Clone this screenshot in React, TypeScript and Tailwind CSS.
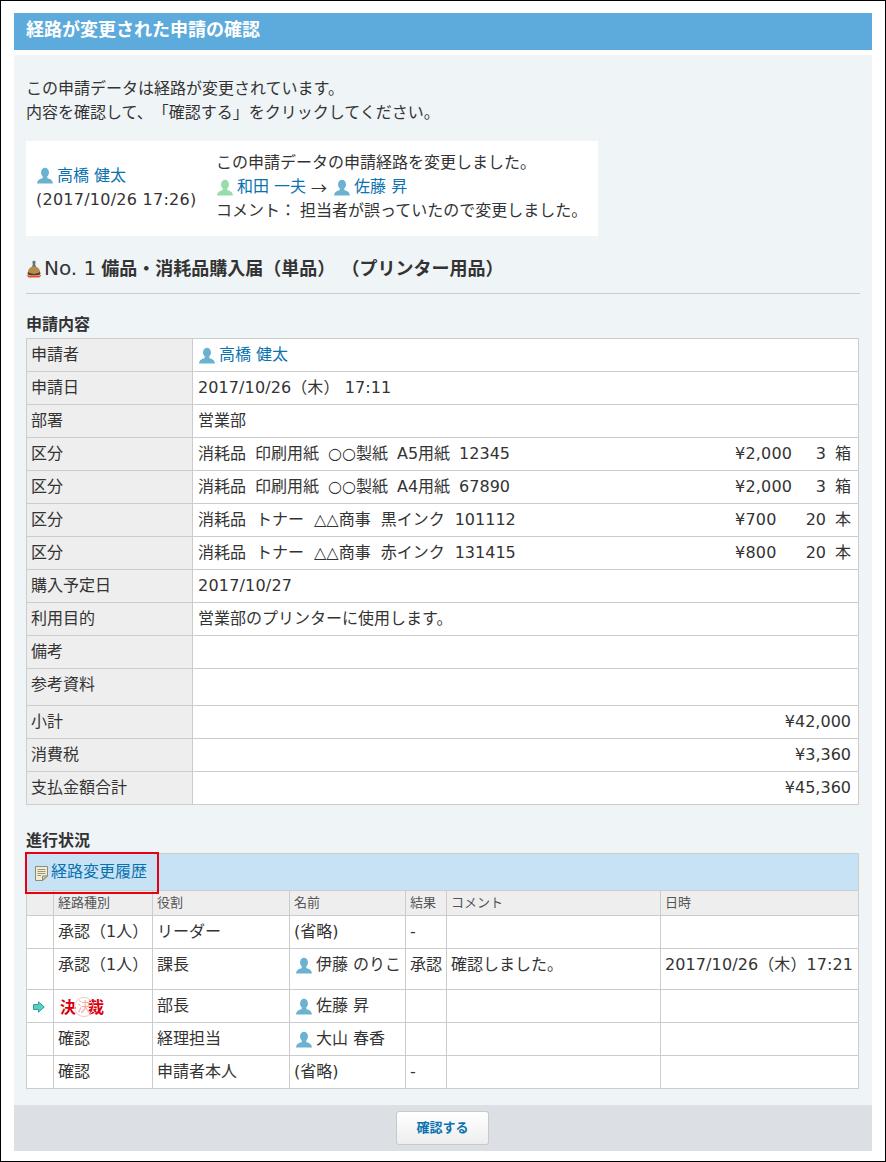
import React from "react";

const F = "font-['DejaVu_Sans','Noto_Sans_CJK_JP',sans-serif] [text-spacing-trim:space-all]";

function Person({ green = false, className = "" }: { green?: boolean; className?: string }) {
  const c = green ? "#97dcaa" : "#6bb2d0";
  return (
    <svg width="16" height="17" viewBox="0 0 16 17" className={"inline-block shrink-0 " + className}>
      <ellipse cx="8" cy="5.6" rx="4" ry="4.8" fill={c} />
      <path d="M5.9 9.5 L10.1 9.5 L10.5 11.2 C13 12 15.5 12.6 16 16.5 L0 16.5 C0.5 12.6 3 12 5.5 11.2 Z" fill={c} />
    </svg>
  );
}

function U({ name, green }: { name: string; green?: boolean }) {
  return (
    <span className="inline-flex items-center">
      <Person green={green} className="ml-[1px] mr-[4px]" />
      <span className="text-[#0b72b0]">{name}</span>
    </span>
  );
}

function P({ name }: { name: string }) {
  return (
    <span className="inline-flex items-center pl-[1px]">
      <Person className="ml-[1px] mr-[4px]" />
      <span>{name}</span>
    </span>
  );
}

function Stamp() {
  return (
    <svg width="16" height="18" viewBox="0 0 16 18" className="shrink-0">
      <path d="M6.4 2 C6.4 0.4 9.6 0.4 9.6 2 L9.2 4.5 L10.2 7 H5.8 L6.8 4.5 Z" fill="#66727c" />
      <path d="M2 12 C2 8.5 5 6.5 8 6.5 C11 6.5 14 8.5 14 12 C14 13.5 2 13.5 2 12 Z" fill="#b98a4e" />
      <path d="M2 11.5 C3 14 13 14 14 11.5 L14.5 14 C13 16 3 16 1.5 14 Z" fill="#5e3b1a" />
      <path d="M0.5 15 C3 16 13 16 15.5 15 L13.5 17.5 H2.5 Z" fill="#e2512a" />
    </svg>
  );
}

function Doc() {
  return (
    <svg width="13" height="15" viewBox="0 0 13 15" className="shrink-0 mt-[3px]">
      <path d="M0.5 0.5 H12.5 V10 L7.5 14.5 H0.5 Z" fill="#f1ecd2" stroke="#8d8a78" />
      <path d="M7.5 14.5 V10 H12.5 Z" fill="#cfc9a6" stroke="#8d8a78" />
      <path d="M2.5 3.5 H10.5 M2.5 5.5 H10.5 M2.5 7.5 H10.5 M2.5 9.5 H6" stroke="#9a9684" />
    </svg>
  );
}

function NextArrow() {
  return (
    <svg width="12" height="12" viewBox="0 0 12 12" className="block">
      <path d="M0.5 3.5 H5.5 V0.8 L11.3 6 L5.5 11.2 V8.5 H0.5 Z" fill="#55d2c6" stroke="#3d9a92" />
    </svg>
  );
}

const th = "border border-[#ccc] bg-[#eee] align-top font-normal text-left pl-[4px] pr-[5px] pt-[5px] text-[16px] leading-[22px]";
const td = "border border-[#ccc] bg-white align-top px-[5px] pt-[5px] text-[16px] leading-[22px]";

function Row({ label, h = "h-[33px]", children }: { label: string; h?: string; children?: React.ReactNode }) {
  return (
    <tr className={h}>
      <th className={th}>{label}</th>
      <td className={td}>{children}</td>
    </tr>
  );
}

function Item({ parts, price, qty, unit, gap = "gap-[9px]" }: { parts: string[]; price: string; qty: string; unit: string; gap?: string }) {
  return (
    <div className="flex pr-[2px] whitespace-nowrap">
      <div className={"flex-1 flex " + gap}>
        {parts.map((p, i) => (
          <span key={i}>{p}</span>
        ))}
      </div>
      <span className="w-[56px] text-left tracking-[0.2px]">{price}</span>
      <span className="w-[35px] text-right">{qty}</span>
      <span className="w-[25px] text-right">{unit}</span>
    </div>
  );
}

const pth = "border border-[#ccc] bg-[#eee] align-top font-normal text-left px-[4px] pt-[3px] text-[13px] leading-[18px] text-[#555]";
const ptd = "border border-[#ccc] bg-white align-top px-[4px] pt-[5px] text-[16px] leading-[22px] whitespace-nowrap";

function PRow({ h = "h-[33px]", cells, mark }: { h?: string; cells: React.ReactNode[]; mark?: boolean }) {
  return (
    <tr className={h}>
      <td className={ptd + " !px-[6px] !pt-[11px]"}>{mark ? <NextArrow /> : null}</td>
      {cells.map((c, i) => (
        <td key={i} className={ptd}>{c}</td>
      ))}
    </tr>
  );
}

export default function App() {
  return (
    <div className={F + " w-[886px] h-[1162px] border border-black bg-white text-[#333] overflow-hidden pt-[12px] px-[13px]"}>
      <div className="h-[37px] bg-[#5dabdc] text-white font-bold text-[18px] leading-[34px] px-[12px]">
        経路が変更された申請の確認
      </div>
      <div className="mt-[5px] h-[1050px] bg-[#eff4f7] px-[12px] pt-[22px]">
        <p className="text-[16px] leading-[24px]">この申請データは経路が変更されています。<br />内容を確認して、「確認する」をクリックしてください。</p>
        <div className="mt-[16px] w-[572px] h-[95px] bg-white flex text-[16px] leading-[24px] pl-[10px] pt-[10px] whitespace-nowrap">
          <div className="w-[180px] pt-[12px]">
            <div className="flex h-[25px] items-center"><U name="高橋 健太" /></div>
            <div className="tracking-[0.25px]">(2017/10/26 17:26)</div>
          </div>
          <div>
            <div>この申請データの申請経路を変更しました。</div>
            <div className="flex h-[24px] items-center"><U name="和田 一夫" green /><span className="ml-[5px] mr-[6px] font-['Noto_Sans_CJK_JP',sans-serif]">→</span><U name="佐藤 昇" /></div>
            <div>コメント：<span className="ml-[4px]">担当者が誤っていたので変更しました。</span></div>
          </div>
        </div>
        <div className="mt-[19px] flex items-center h-[27px] text-[20px] leading-[27px]">
          <Stamp />
          <span className="ml-[2px]">No. 1</span>
          <span className="ml-[5px] font-bold text-[18px] whitespace-pre">備品・消耗品購入届（単品） （プリンター用品）</span>
        </div>
        <div className="mt-[11px] border-t border-[#ccc]" />
        <div className="mt-[21px] font-bold text-[16px] leading-[20px] h-[23px]">申請内容</div>
        <table className="w-[833px] border-collapse table-fixed">
          <colgroup>
            <col className="w-[166px]" />
            <col />
          </colgroup>
          <tbody>
            <Row label="申請者"><U name="高橋 健太" /></Row>
            <Row label="申請日"><span className="tracking-[0.1px]">2017/10/26（木） 17:11</span></Row>
            <Row label="部署">営業部</Row>
            <Row label="区分"><Item parts={["消耗品", "印刷用紙", "○○製紙", "A5用紙", "12345"]} price="¥2,000" qty="3" unit="箱" /></Row>
            <Row label="区分"><Item parts={["消耗品", "印刷用紙", "○○製紙", "A4用紙", "67890"]} price="¥2,000" qty="3" unit="箱" /></Row>
            <Row label="区分"><Item gap="gap-[10px]" parts={["消耗品", "トナー", "△△商事", "黒インク", "101112"]} price="¥700" qty="20" unit="本" /></Row>
            <Row label="区分"><Item gap="gap-[10px]" parts={["消耗品", "トナー", "△△商事", "赤インク", "131415"]} price="¥800" qty="20" unit="本" /></Row>
            <Row label="購入予定日"><span className="tracking-[0.2px]">2017/10/27</span></Row>
            <Row label="利用目的">営業部のプリンターに使用します。</Row>
            <Row label="備考" />
            <Row label="参考資料" h="h-[37px]" />
            <Row label="小計"><div className="text-right pr-[2px]">¥42,000</div></Row>
            <Row label="消費税"><div className="text-right pr-[2px]">¥3,360</div></Row>
            <Row label="支払金額合計"><div className="text-right pr-[2px]">¥45,360</div></Row>
          </tbody>
        </table>
        <div className="mt-[26px] font-bold text-[16px] leading-[20px] h-[22px]">進行状況</div>
        <div className="relative w-[833px] h-[37px] bg-[#c7e2f5] border border-[#ccc] border-b-0 flex items-center pl-[8px] text-[16px] text-[#0b72b0]">
          <Doc />
          <span className="ml-[3px]">経路変更履歴</span>
          <div className="absolute left-[-2px] top-[-2px] w-[134px] h-[42px] border-2 border-[#e60012]" />
        </div>
        <table className="w-[833px] border-collapse table-fixed">
          <colgroup>
            <col className="w-[27px]" />
            <col className="w-[99px]" />
            <col className="w-[137px]" />
            <col className="w-[116px]" />
            <col className="w-[41px]" />
            <col className="w-[214px]" />
            <col />
          </colgroup>
          <tbody>
            <tr className="h-[25px]">
              <td className={pth}></td>
              <td className={pth}>経路種別</td>
              <td className={pth}>役割</td>
              <td className={pth}>名前</td>
              <td className={pth}>結果</td>
              <td className={pth}>コメント</td>
              <td className={pth}>日時</td>
            </tr>
            <PRow cells={["承認（1人）", "リーダー", "(省略)", "-", "", ""]} />
            <PRow h="h-[41px]" cells={["承認（1人）", "課長", <P name="伊藤 のりこ" />, "承認", "確認しました。", <span className="tracking-[0.1px]">2017/10/26（木）17:21</span>]} />
            <PRow mark cells={[
              <span className="relative top-[1px] inline-block w-[48px] pl-[2px] font-bold text-[16px] leading-[24px] text-[#d6000f] tracking-[12px]">
                決裁
                <span className="absolute left-[16px] top-[1px] w-[20px] h-[20px] rounded-full border border-[#f8c4c4] text-[#f7a8a8] text-[13px] leading-[18px] font-normal tracking-normal text-center">決</span>
              </span>,
              "部長", <P name="佐藤 昇" />, "", "", ""]} />
            <PRow cells={["確認", "経理担当", <P name="大山 春香" />, "", "", ""]} />
            <PRow cells={["確認", "申請者本人", "(省略)", "-", "", ""]} />
          </tbody>
        </table>
      </div>
      <div className="h-[46px] bg-[#dce0e4] flex justify-center pt-[6px]">
        <button className="w-[93px] h-[34px] mr-[1px] rounded-[3px] border border-[#c4cbd0] bg-gradient-to-b from-white to-[#eee] text-[13px] font-bold text-[#0b72b0]">確認する</button>
      </div>
    </div>
  );
}
